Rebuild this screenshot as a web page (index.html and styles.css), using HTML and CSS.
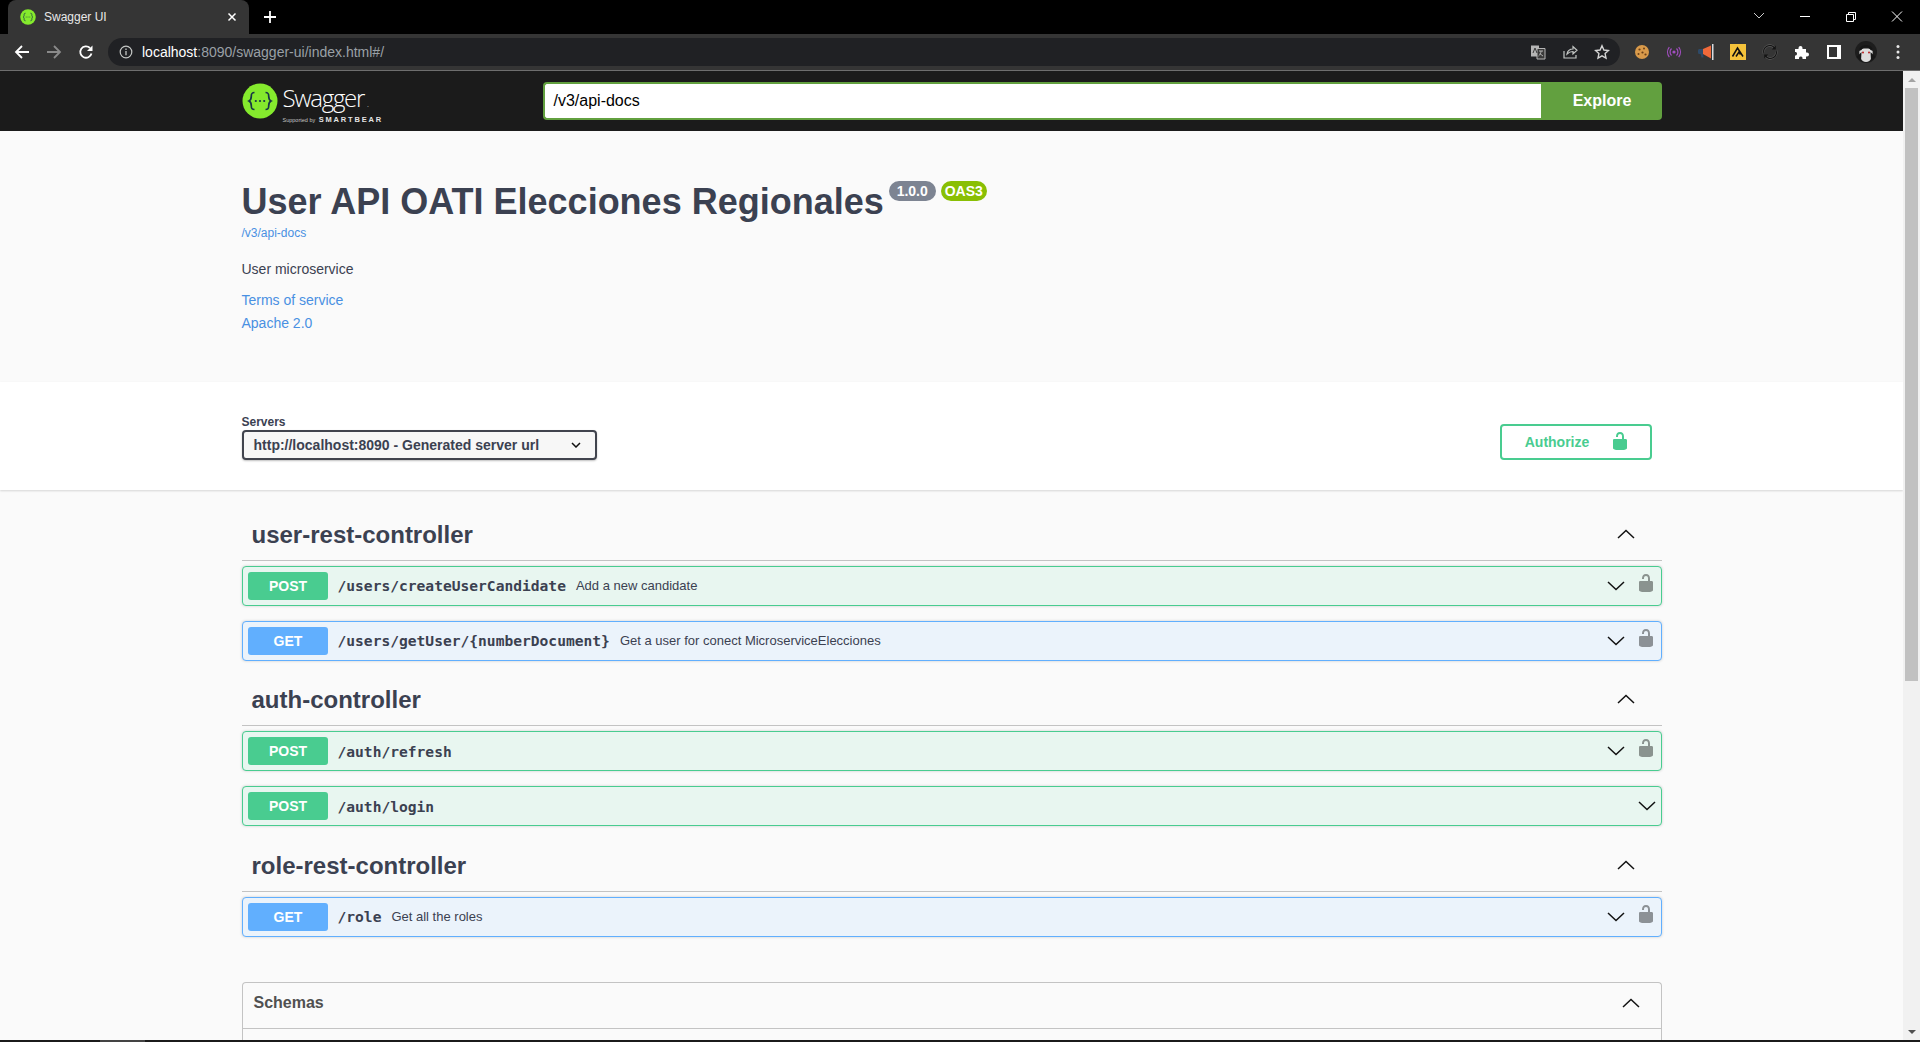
FILE: index.html
```html
<!DOCTYPE html>
<html lang="en">
<head>
  <meta charset="UTF-8">
  <title>Swagger UI</title>
  <link rel="stylesheet" href="styles.css">
</head>
<body>
<svg class="defs">
  <defs>
    <symbol id="lock" viewBox="0 0 20 20"><path d="M15.8 8H14V5.6C14 2.703 12.665 1 10 1 7.334 1 6 2.703 6 5.6V6h2v-.801C8 3.754 8.797 3 10 3c1.203 0 2 .754 2 2.199V8H4c-.553 0-1 .646-1 1.199V17c0 .549.428 1.139.951 1.307l1.197.387C5.672 18.861 6.55 19 7.1 19h5.8c.549 0 1.428-.139 1.951-.307l1.196-.387c.524-.167.953-.757.953-1.306V9.199C17 8.646 16.352 8 15.8 8z"/></symbol>
    <symbol id="down" viewBox="0 0 18 10"><path d="M1 1l8 7.5L17 1" fill="none" stroke="#111" stroke-width="1.5"/></symbol>
    <symbol id="up" viewBox="0 0 18 10"><path d="M1 9l8-7.5L17 9" fill="none" stroke="#111" stroke-width="1.5"/></symbol>
    <symbol id="swg" viewBox="0 0 36 36">
      <circle cx="18" cy="18" r="17.5" fill="#85ea2d"/>
      <path d="M12.5 9.5c-3 0-3.2 1.5-3.2 3.8 0 2.4-.3 3.7-2.3 4.7 2 1 2.3 2.3 2.3 4.7 0 2.3.2 3.8 3.2 3.8M23.5 9.5c3 0 3.2 1.5 3.2 3.8 0 2.4.3 3.7 2.3 4.7-2 1-2.3 2.3-2.3 4.7 0 2.3-.2 3.8-3.2 3.8" fill="none" stroke="#173647" stroke-width="1.7"/>
      <circle cx="13.8" cy="18" r="1.1" fill="#173647"/><circle cx="18" cy="18" r="1.1" fill="#173647"/><circle cx="22.2" cy="18" r="1.1" fill="#173647"/>
    </symbol>
  </defs>
</svg>

<div class="tabstrip">
  <div class="tab">
    <svg class="favicon"><use href="#swg"/></svg>
    <span class="tab-title">Swagger UI</span>
    <svg class="tab-close" viewBox="0 0 10 10"><path d="M1.5 1.5l7 7M8.5 1.5l-7 7" stroke="#fff" stroke-width="1.5"/></svg>
  </div>
  <svg class="new-tab" viewBox="0 0 12 12"><path d="M6 0v12M0 6h12" stroke="#fff" stroke-width="1.8"/></svg>
  <div class="window-btns">
    <svg class="win" viewBox="0 0 46 20"><path d="M18 7l5 5 5-5" fill="none" stroke="#ccc" stroke-width="1"/></svg>
    <svg class="win" viewBox="0 0 46 20"><path d="M18 10.5h10" stroke="#fff" stroke-width="1"/></svg>
    <svg class="win" viewBox="0 0 46 20"><path d="M18.5 8.5h7v7h-7zM20.5 8.5v-2h7v7h-2" fill="none" stroke="#fff" stroke-width="1"/></svg>
    <svg class="win" viewBox="0 0 46 20"><path d="M18 5.5l10 10M28 5.5l-10 10" stroke="#fff" stroke-width="1"/></svg>
  </div>
</div>

<div class="toolbar">
  <svg class="nav-icon" viewBox="0 0 16 16"><path d="M15 8H2.5M8 2L2 8l6 6" fill="none" stroke="#fff" stroke-width="1.8"/></svg>
  <svg class="nav-icon" viewBox="0 0 16 16"><path d="M1 8h12.5M8 2l6 6-6 6" fill="none" stroke="#8a8a8a" stroke-width="1.8"/></svg>
  <svg class="nav-icon" viewBox="0 0 16 16"><path d="M13.5 9.5A5.7 5.7 0 1 1 12 4" fill="none" stroke="#fff" stroke-width="1.8"/><path d="M14.5 1.5V7H9z" fill="#fff"/></svg>
  <div class="omnibox">
    <svg class="info-icon" viewBox="0 0 14 14"><circle cx="7" cy="7" r="5.8" fill="none" stroke="#c4c7c5" stroke-width="1.2"/><path d="M7 6v4.2M7 3.6v1.3" stroke="#c4c7c5" stroke-width="1.3"/></svg>
    <span class="url"><b>localhost</b>:8090/swagger-ui/index.html#/</span>
    <div class="omni-actions">
      <svg class="ext" viewBox="0 0 16 16"><path d="M1 1.5h8v11H1z" fill="#b5b5b5"/><path d="M7 4.5h8V15H7z" fill="#3a3a3a" stroke="#b5b5b5"/><path d="M9 7h4M11 7c0 2-1 4-2.5 5M10 9.5c.8 1 1.8 2 3 2.5" fill="none" stroke="#b5b5b5"/><path d="M3 9l2-5 2 5" fill="none" stroke="#3a3a3a"/></svg>
      <svg class="ext" viewBox="0 0 16 16"><path d="M2 7v7h12v-3" fill="none" stroke="#c4c7c5" stroke-width="1.2"/><path d="M5 10c.5-3 2.5-5 6-5V2.5l4 3.7-4 3.7V7.500c-3 0-4.500 1-6 2.500z" fill="none" stroke="#c4c7c5" stroke-width="1.2"/></svg>
      <svg class="ext" viewBox="0 0 16 16"><path d="M8 1.8L9.9 6l4.600.5-3.400 3.100.9 4.500L8 11.800l-4 2.300.9-4.500-3.400-3.100L6.100 6z" fill="none" stroke="#d5d5d5" stroke-width="1.4"/></svg>
    </div>
  </div>
  <div class="extensions">
    <svg class="ext" viewBox="0 0 16 16"><circle cx="8" cy="8" r="7" fill="#d99a4a"/><circle cx="5.5" cy="5.5" r="1.1" fill="#6b3f17"/><circle cx="10" cy="4.5" r="1" fill="#6b3f17"/><circle cx="8.5" cy="8.5" r="1.1" fill="#6b3f17"/><circle cx="4.5" cy="10" r="1" fill="#6b3f17"/><circle cx="11.5" cy="10.5" r="1.1" fill="#6b3f17"/></svg>
    <svg class="ext" viewBox="0 0 16 16"><circle cx="8" cy="8" r="1.6" fill="#a24ec0"/><path d="M5.5 4.5a5 5 0 0 0 0 7M10.5 4.5a5 5 0 0 1 0 7M3.3 3a8 8 0 0 0 0 10M12.7 3a8 8 0 0 1 0 10" fill="none" stroke="#a24ec0" stroke-width="1.2"/></svg>
    <svg class="ext" viewBox="0 0 16 16"><path d="M0 6.5c0-1 .8-1.500 1.500-1.500H5v5H1.500C.8 10 0 9.500 0 8.500z" fill="#2e4a68"/><path d="M2.5 10H5l.5 3.500h-2z" fill="#2e4a68"/><path d="M5 5l8-3.500v13L5 10z" fill="#f0693a"/><path d="M14 0h1.500v16H14z" fill="#d8dce0"/></svg>
    <svg class="ext" viewBox="0 0 16 16"><path d="M0 0h16v16H0z" fill="#f5c33b"/><path d="M2.5 12.500L7.500 4l5.500 8.500M6 12.500l3-4.500 1.500 2.500" fill="none" stroke="#111" stroke-width="1.5"/></svg>
    <svg class="ext" viewBox="0 0 16 16"><path d="M2 9.5A6 6 0 0 1 12.500 4M14 6.500A6 6 0 0 1 3.500 12" fill="none" stroke="#5a5a5a" stroke-width="2.4"/><path d="M2 9.5A6 6 0 0 1 12.500 4M14 6.500A6 6 0 0 1 3.500 12" fill="none" stroke="#141414" stroke-width="1.3"/><path d="M13.8 1.5v4h-4zM2.2 14.500v-4h4z" fill="#141414"/></svg>
    <svg class="ext" viewBox="0 0 16 16"><path d="M1 5h3.500V4a2 2 0 0 1 4 0v1H12v3.500h1a2 2 0 0 1 0 4h-1V15H8.500v-1.200a1.800 1.800 0 0 0-3.500 0V15H1v-3.500h1a2 2 0 0 0 0-3.500H1z" fill="#fff"/></svg>
    <svg class="ext" viewBox="0 0 16 16"><path d="M1 1h14v14H1z" fill="#fff"/><path d="M3 3h8v10H3z" fill="#353535"/></svg>
    <svg class="ext avatar" viewBox="0 0 22 22"><circle cx="11" cy="11" r="11" fill="#1d1d1d"/><path d="M4.5 9c1.500-2 11.500-2 13 0 .8 6-1.500 12-6.500 12S3.700 15 4.500 9z" fill="#dedede"/><path d="M4 10C4 2 18 2 18 10l-2.500-1c-1-2-2-3-4.500-3s-3.500 1-4.500 3zM1.500 16L6 20l.5-9zM20.500 16L16 20l-.5-9z" fill="#161616"/><circle cx="8" cy="11.5" r="1" fill="#b22"/><circle cx="14" cy="11.5" r="1" fill="#b22"/></svg>
    <svg class="ext" viewBox="0 0 16 16"><circle cx="8" cy="2.5" r="1.5" fill="#e8e8e8"/><circle cx="8" cy="8" r="1.5" fill="#e8e8e8"/><circle cx="8" cy="13.5" r="1.5" fill="#e8e8e8"/></svg>
  </div>
</div>

<div class="viewport">
  <div class="page">
    <div class="topbar">
      <div class="wrapper topbar-inner">
        <div class="logo">
          <svg class="logo-mark"><use href="#swg"/></svg>
          <div class="logo-text">
            <span class="logo-name">Swagger<small>.</small></span>
            <span class="logo-sub">Supported by <b>SMARTBEAR</b></span>
          </div>
        </div>
        <form class="download-url">
          <div class="url-input">/v3/api-docs</div>
          <div class="explore">Explore</div>
        </form>
      </div>
    </div>

    <div class="info">
      <div class="wrapper">
        <div class="title-row">
          <h2 class="title">User API OATI Elecciones Regionales</h2>
          <span class="badge version">1.0.0</span>
          <span class="badge oas">OAS3</span>
        </div>
        <a class="link base-url" href="#">/v3/api-docs</a>
        <p class="description">User microservice</p>
        <a class="link info-link" href="#">Terms of service</a>
        <a class="link info-link" href="#">Apache 2.0</a>
      </div>
    </div>

    <div class="scheme-bar">
      <div class="wrapper scheme-inner">
        <div class="servers">
          <span class="servers-label">Servers</span>
          <div class="select">
            <span>http://localhost:8090 - Generated server url</span>
            <svg viewBox="0 0 10 6"><path d="M1 1l4 4 4-4" fill="none" stroke="#111" stroke-width="1.5"/></svg>
          </div>
        </div>
        <div class="authorize">
          <span>Authorize</span>
          <svg><use href="#lock"/></svg>
        </div>
      </div>
    </div>

    <div class="wrapper content">
      <div class="tag"><h3>user-rest-controller</h3><svg class="chev"><use href="#up"/></svg></div>
      <div class="op post">
        <span class="method">POST</span>
        <span class="path">/users/createUserCandidate</span>
        <span class="summary">Add a new candidate</span>
        <svg class="chev"><use href="#down"/></svg>
        <svg class="op-lock"><use href="#lock"/></svg>
      </div>
      <div class="op get">
        <span class="method">GET</span>
        <span class="path">/users/getUser/{numberDocument}</span>
        <span class="summary">Get a user for conect MicroserviceElecciones</span>
        <svg class="chev"><use href="#down"/></svg>
        <svg class="op-lock"><use href="#lock"/></svg>
      </div>

      <div class="tag"><h3>auth-controller</h3><svg class="chev"><use href="#up"/></svg></div>
      <div class="op post">
        <span class="method">POST</span>
        <span class="path">/auth/refresh</span>
        <svg class="chev"><use href="#down"/></svg>
        <svg class="op-lock"><use href="#lock"/></svg>
      </div>
      <div class="op post">
        <span class="method">POST</span>
        <span class="path">/auth/login</span>
        <svg class="chev"><use href="#down"/></svg>
      </div>

      <div class="tag"><h3>role-rest-controller</h3><svg class="chev"><use href="#up"/></svg></div>
      <div class="op get">
        <span class="method">GET</span>
        <span class="path">/role</span>
        <span class="summary">Get all the roles</span>
        <svg class="chev"><use href="#down"/></svg>
        <svg class="op-lock"><use href="#lock"/></svg>
      </div>

      <div class="schemas">
        <div class="schemas-head"><h4>Schemas</h4><svg class="chev"><use href="#up"/></svg></div>
      </div>
    </div>
  </div>

  <div class="scrollbar">
    <div class="scroll-arrow"><i class="tri-up"></i></div>
    <div class="scroll-thumb"></div>
    <div class="scroll-track"></div>
    <div class="scroll-arrow"><i class="tri-down"></i></div>
  </div>
</div>
<div class="taskbar"><i></i></div>
</body>
</html>
```

FILE: styles.css
```css
* {
  box-sizing: border-box;
}
html, body {
  height: 100%;
}
body {
  margin: 0;
  display: flex;
  flex-direction: column;
  overflow: hidden;
  font-family: "Liberation Sans", Arial, sans-serif;
  color: #3b4151;
  background: #000;
}
.defs {
  display: none;
}
a {
  text-decoration: none;
}

/* browser chrome */
.tabstrip {
  height: 34px;
  flex: none;
  display: flex;
  align-items: flex-end;
  background: #000;
}
.tab {
  width: 241px;
  height: 34px;
  margin-left: 8px;
  padding: 0 12px;
  display: flex;
  align-items: center;
  background: #353535;
  border-radius: 8px 8px 0 0;
  color: #e8e8e8;
  font-size: 12px;
}
.favicon {
  width: 16px;
  height: 16px;
  margin-right: 8px;
}
.tab-title {
  flex: 1;
}
.tab-close {
  width: 10px;
  height: 10px;
}
.new-tab {
  width: 12px;
  height: 12px;
  margin: 0 0 11px 15px;
}
.window-btns {
  margin-left: auto;
  align-self: flex-start;
  display: flex;
  padding-top: 6px;
}
.win {
  width: 46px;
  height: 20px;
}
.toolbar {
  height: 37px;
  flex: none;
  display: flex;
  align-items: center;
  padding: 0 0 1px 14px;
  background: #353535;
  border-bottom: 1px solid #6e6e6e;
}
.nav-icon {
  width: 16px;
  height: 16px;
  margin-right: 16px;
}
.omnibox {
  width: 1512px;
  height: 28px;
  margin-left: -2px;
  display: flex;
  align-items: center;
  padding-left: 11px;
  background: #202124;
  border-radius: 14px;
  font-size: 14px;
}
.info-icon {
  width: 14px;
  height: 14px;
  margin-right: 9px;
}
.url {
  color: #9aa0a6;
}
.url b {
  font-weight: 400;
  color: #fff;
}
.omni-actions {
  margin-left: auto;
  display: flex;
  gap: 16px;
  padding-right: 10px;
}
.ext {
  width: 16px;
  height: 16px;
  display: block;
}
.extensions {
  display: flex;
  gap: 16px;
  margin-left: 14px;
}
.avatar {
  width: 22px;
  height: 22px;
  margin: -3px;
}

/* page */
.viewport {
  flex: 1;
  min-height: 0;
  display: flex;
}
.page {
  flex: 1;
  min-width: 0;
  overflow: hidden;
  background: #fafafa;
}
.wrapper {
  width: 1460px;
  margin: 0 auto;
  padding: 0 20px;
}
.scrollbar {
  width: 17px;
  flex: none;
  display: flex;
  flex-direction: column;
  background: #f1f1f1;
}
.scroll-arrow {
  height: 17px;
  display: flex;
  align-items: center;
  justify-content: center;
}
.tri-up, .tri-down {
  width: 0;
  height: 0;
  border-left: 4px solid transparent;
  border-right: 4px solid transparent;
}
.tri-up {
  border-bottom: 4px solid #a3a3a3;
}
.tri-down {
  border-top: 4px solid #505050;
}
.scroll-thumb {
  height: 593px;
  margin: 0 2px;
  background: #c1c1c1;
}
.scroll-track {
  flex: 1;
}
.taskbar {
  height: 2px;
  flex: none;
  background: #1b1b1b;
}
.taskbar i {
  display: block;
  width: 45px;
  height: 2px;
  margin-left: 100px;
  background: #444;
}

/* swagger topbar */
.topbar {
  height: 60px;
  background: #1b1b1b;
}
.topbar-inner {
  height: 60px;
  display: flex;
  align-items: center;
}
.logo {
  width: 301px;
  display: flex;
  align-items: center;
  color: #fff;
}
.logo-mark {
  width: 36px;
  height: 36px;
  margin-right: 5px;
}
.logo-text {
  display: flex;
  flex-direction: column;
  padding-top: 4px;
}
.logo-name {
  font-family: "Open Sans", sans-serif;
  font-weight: 300;
  font-size: 24px;
  line-height: 27px;
  letter-spacing: -1.3px;
}
.logo-name small {
  font-size: 8px;
  margin-left: 3px;
}
.logo-sub {
  font-size: 5.5px;
  line-height: 6px;
  color: #c4c4c4;
}
.logo-sub b {
  margin-left: 2px;
  font-size: 7.5px;
  letter-spacing: 1.8px;
  color: #e4e4e4;
}
.download-url {
  flex: 1;
  height: 38px;
  margin: 0;
  display: flex;
}
.url-input {
  flex: 1;
  display: flex;
  align-items: center;
  padding: 0 9px;
  background: #fff;
  border: 2px solid #62a03f;
  border-right: none;
  border-radius: 4px 0 0 4px;
  font-size: 16px;
  color: #000;
}
.explore {
  width: 121px;
  padding-left: 2px;
  display: flex;
  align-items: center;
  justify-content: center;
  background: #62a03f;
  border-radius: 0 4px 4px 0;
  color: #fff;
  font-size: 16px;
  font-weight: 700;
}

/* info */
.info {
  height: 251px;
  padding-top: 50px;
}
.title-row {
  display: flex;
  align-items: flex-start;
  height: 42px;
}
.title {
  margin: 0;
  font-size: 36px;
  line-height: 42px;
  font-weight: 700;
}
.badge {
  height: 20px;
  margin: 0 0 0 5px;
  padding: 0 5px;
  display: flex;
  align-items: center;
  border-radius: 57px;
  color: #fff;
  font-size: 14px;
  font-weight: 700;
}
.version {
  width: 47px;
  justify-content: center;
  background: #7d8492;
}
.oas {
  width: 46px;
  justify-content: center;
  background: #89bf04;
}
.link {
  display: block;
  color: #4990e2;
}
.base-url {
  margin-top: 3px;
  font-size: 12px;
  line-height: 15px;
}
.description {
  margin: 19px 0 13px;
  font-size: 14px;
  line-height: 18px;
  color: #3b4151;
}
.info-link {
  font-size: 14px;
  line-height: 18px;
  margin-bottom: 5px;
}
.scheme-bar {
  height: 108px;
  background: #fff;
  box-shadow: 0 1px 2px 0 rgba(0, 0, 0, .15);
  padding-top: 33px;
  position: relative;
}
.scheme-inner {
  display: flex;
  justify-content: space-between;
  align-items: flex-end;
}
.servers-label {
  display: block;
  font-size: 12px;
  line-height: 15px;
  font-weight: 700;
}
.select {
  width: 355px;
  height: 30px;
  padding: 0 14px 0 10px;
  display: flex;
  align-items: center;
  justify-content: space-between;
  background: #f7f7f7;
  border: 2px solid #41444e;
  border-radius: 4px;
  box-shadow: 0 1px 2px 0 rgba(0, 0, 0, .25);
  font-size: 14px;
  font-weight: 700;
}
.select svg {
  width: 10px;
  height: 6px;
}
.authorize {
  width: 152px;
  height: 36px;
  margin-right: 10px;
  padding-left: 4px;
  display: flex;
  align-items: center;
  justify-content: center;
  gap: 21px;
  border: 2px solid #49cc90;
  border-radius: 4px;
  color: #49cc90;
  font-size: 14px;
  font-weight: 700;
}
.authorize svg {
  width: 20px;
  height: 20px;
  margin-top: -2px;
  fill: #49cc90;
}

/* operations */
.content {
  padding-top: 20.2px;
}
.tag {
  height: 50.5px;
  margin-bottom: 5px;
  padding: 0 27px 0 10px;
  display: flex;
  align-items: center;
  justify-content: space-between;
  border-bottom: 1px solid #c3c3c3;
}
.tag h3 {
  margin: 0;
  font-size: 24px;
  font-weight: 700;
  line-height: 30px;
}
.tag .chev {
  margin-top: -2px;
}
.chev {
  width: 18px;
  height: 10px;
  flex: none;
}
.op {
  height: 40px;
  margin-bottom: 15px;
  padding: 0 5px;
  display: flex;
  align-items: center;
  border: 1px solid;
  border-radius: 4px;
  box-shadow: 0 0 3px rgba(0, 0, 0, .19);
}
.op.post {
  background: #e8f6f0;
  border-color: #49cc90;
}
.op.get {
  background: #ebf3fb;
  border-color: #61affe;
}
.method {
  width: 80px;
  height: 28px;
  padding-left: 1px;
  display: flex;
  align-items: center;
  justify-content: center;
  flex: none;
  border-radius: 3px;
  color: #fff;
  font-size: 14px;
  font-weight: 700;
}
.post .method {
  background: #49cc90;
}
.get .method {
  background: #61affe;
}
.path {
  margin-left: 10px;
  font-family: "DejaVu Sans Mono", monospace;
  font-size: 14.6px;
  font-weight: 700;
}
.summary {
  margin: -1px 0 0 10px;
  font-size: 13px;
}
.op .chev {
  margin-left: auto;
}
.op-lock {
  width: 20px;
  height: 20px;
  flex: none;
  margin: -6px 0 0 11px;
  fill: #000;
  opacity: .4;
}
.schemas {
  height: 58px;
  margin-top: 45px;
  border: 1px solid #c3c3c3;
  border-bottom: none;
  border-radius: 4px 4px 0 0;
}
.schemas-head {
  height: 46px;
  padding: 0 21px 5px 11px;
  display: flex;
  align-items: center;
  justify-content: space-between;
  border-bottom: 1px solid #c3c3c3;
}
.schemas-head h4 {
  margin: 0;
  font-size: 16px;
  font-weight: 700;
  color: #505050;
}
```
